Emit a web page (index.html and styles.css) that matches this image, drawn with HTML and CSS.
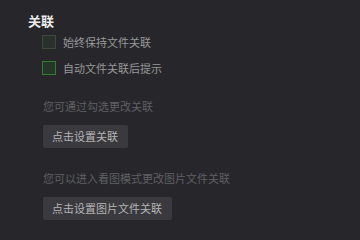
FILE: index.html
```html
<!DOCTYPE html>
<html lang="zh-CN">
<head>
<meta charset="utf-8">
<link rel="stylesheet" href="styles.css">
</head>
<body>
<div class="panel">
  <div class="title">关联</div>
  <div class="options">
    <label class="option"><span class="box"></span><span class="label">始终保持文件关联</span></label>
    <label class="option"><span class="box box-active"></span><span class="label">自动文件关联后提示</span></label>
  </div>
  <div class="section first">
    <div class="desc">您可通过勾选更改关联</div>
    <button class="btn">点击设置关联</button>
  </div>
  <div class="section">
    <div class="desc">您可以进入看图模式更改图片文件关联</div>
    <button class="btn">点击设置图片文件关联</button>
  </div>
</div>
</body>
</html>
```
FILE: styles.css
```css
html, body {
  margin: 0;
  padding: 0;
  background: #27272b;
  width: 360px;
  height: 240px;
  overflow: hidden;
}
body {
  font-family: "Noto Sans CJK SC", "Noto Sans", sans-serif;
}
.panel {
  padding: 12px 0 0 28px;
}
.title {
  font-size: 13px;
  font-weight: bold;
  line-height: 18px;
  color: #ececec;
}
.options {
  margin: 2px 0 0 14px;
  display: flex;
  flex-direction: column;
  gap: 6px;
}
.option {
  display: flex;
  align-items: center;
  height: 20px;
  gap: 7px;
}
.box {
  width: 12px;
  height: 12px;
  border: 1px solid #3c4a3c;
  background: #2a302b;
  box-sizing: content-box;
}
.box-active {
  border-color: #2f7d30;
  background: #25352a;
}
.label {
  font-size: 11px;
  line-height: 16px;
  color: #989898;
}
.section {
  margin-left: 15px;
  display: flex;
  flex-direction: column;
  align-items: flex-start;
}
.section.first {
  margin-top: 20px;
}
.section + .section {
  margin-top: 22px;
}
.desc {
  font-size: 11px;
  line-height: 16px;
  color: #5f5f64;
}
.btn {
  margin-top: 11px;
  height: 23px;
  padding: 0 10px 0 9px;
  border: none;
  border-radius: 2px;
  background: #3a3a3e;
  color: #b4b4b4;
  font-family: "Noto Sans CJK SC", "Noto Sans", sans-serif;
  font-size: 11px;
  line-height: 23px;
}
```
